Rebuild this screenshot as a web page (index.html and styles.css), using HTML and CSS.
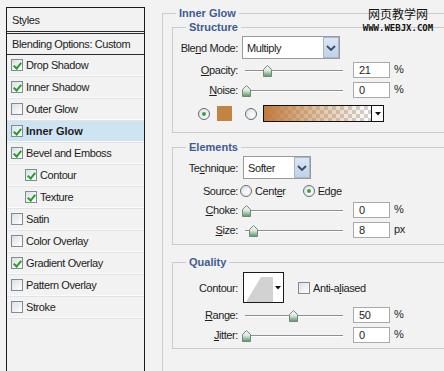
FILE: index.html
```html
<!DOCTYPE html>
<html>
<head>
<meta charset="utf-8">
<link rel="stylesheet" href="styles.css">
</head>
<body>
<svg class="defs" width="0" height="0">
  <defs>
    <linearGradient id="thumbGrad" x1="0" y1="0" x2="0" y2="1">
      <stop offset="0" stop-color="#f6f8f6"/>
      <stop offset="0.45" stop-color="#dfe8e1"/>
      <stop offset="1" stop-color="#4e9b5d"/>
    </linearGradient>
  </defs>
</svg>

<div class="styles-panel">
  <div class="panel-head">Styles</div>
  <div class="blend-row">Blending Options: Custom</div>
  <div class="item"><span class="cb on"></span>Drop Shadow</div>
  <div class="item"><span class="cb on"></span>Inner Shadow</div>
  <div class="item"><span class="cb"></span>Outer Glow</div>
  <div class="item active"><span class="cb on"></span><b>Inner Glow</b></div>
  <div class="item"><span class="cb on"></span>Bevel and Emboss</div>
  <div class="item sub"><span class="cb on"></span>Contour</div>
  <div class="item sub"><span class="cb on"></span>Texture</div>
  <div class="item"><span class="cb"></span>Satin</div>
  <div class="item"><span class="cb"></span>Color Overlay</div>
  <div class="item"><span class="cb on"></span>Gradient Overlay</div>
  <div class="item"><span class="cb"></span>Pattern Overlay</div>
  <div class="item"><span class="cb"></span>Stroke</div>
</div>

<div class="effect">
  <fieldset class="outer">
    <legend class="outer-legend">Inner Glow</legend>

    <fieldset class="group structure">
      <legend>Structure</legend>
      <div class="row">
        <span class="lbl">Ble<u>n</u>d Mode:</span>
        <div class="select blend-select"><span class="sel-text">Multiply</span><span class="sel-btn"><svg viewBox="0 0 10 6" width="10" height="6"><path d="M1 1 L5 5 L9 1" fill="none" stroke="#3c4a5c" stroke-width="1.8"/></svg></span></div>
      </div>
      <div class="row slider-row r-opacity">
        <span class="lbl"><u>O</u>pacity:</span>
        <div class="slider"><svg class="thumb" style="left:18px" viewBox="0 0 9 12" width="9" height="12"><path d="M0.5 4.5 L4.5 0.5 L8.5 4.5 V11.5 H0.5 Z" fill="url(#thumbGrad)" stroke="#77857a"/></svg></div>
        <span class="num">21</span><span class="unit">%</span>
      </div>
      <div class="row slider-row r-noise">
        <span class="lbl"><u>N</u>oise:</span>
        <div class="slider"><svg class="thumb" style="left:-3px" viewBox="0 0 9 12" width="9" height="12"><path d="M0.5 4.5 L4.5 0.5 L8.5 4.5 V11.5 H0.5 Z" fill="url(#thumbGrad)" stroke="#77857a"/></svg></div>
        <span class="num">0</span><span class="unit">%</span>
      </div>
      <div class="row color-row">
        <span class="radio on"></span>
        <span class="swatch"></span>
        <span class="radio"></span>
        <div class="gradient"><span class="grad-fill"></span><span class="grad-btn"><svg viewBox="0 0 6 4" width="6" height="4"><path d="M0 0 H6 L3 3.5 Z" fill="#111"/></svg></span></div>
      </div>
    </fieldset>

    <fieldset class="group elements">
      <legend>Elements</legend>
      <div class="row">
        <span class="lbl">Te<u>c</u>hnique:</span>
        <div class="select tech-select"><span class="sel-text">Softer</span><span class="sel-btn"><svg viewBox="0 0 10 6" width="10" height="6"><path d="M1 1 L5 5 L9 1" fill="none" stroke="#3c4a5c" stroke-width="1.8"/></svg></span></div>
      </div>
      <div class="row source-row">
        <span class="lbl">Source:</span>
        <span class="radio r-center"></span><span class="opt">Cent<u>e</u>r</span>
        <span class="radio on r-edge"></span><span class="opt">Ed<u>g</u>e</span>
      </div>
      <div class="row slider-row r-choke">
        <span class="lbl"><u>C</u>hoke:</span>
        <div class="slider"><svg class="thumb" style="left:-3px" viewBox="0 0 9 12" width="9" height="12"><path d="M0.5 4.5 L4.5 0.5 L8.5 4.5 V11.5 H0.5 Z" fill="url(#thumbGrad)" stroke="#77857a"/></svg></div>
        <span class="num">0</span><span class="unit">%</span>
      </div>
      <div class="row slider-row r-size">
        <span class="lbl"><u>S</u>ize:</span>
        <div class="slider"><svg class="thumb" style="left:4px" viewBox="0 0 9 12" width="9" height="12"><path d="M0.5 4.5 L4.5 0.5 L8.5 4.5 V11.5 H0.5 Z" fill="url(#thumbGrad)" stroke="#77857a"/></svg></div>
        <span class="num">8</span><span class="unit">px</span>
      </div>
    </fieldset>

    <fieldset class="group quality">
      <legend>Quality</legend>
      <div class="row contour-row">
        <span class="lbl">Contour:</span>
        <div class="contour">
          <svg viewBox="0 0 29 28" width="29" height="28"><path d="M2 28 L17 3 H29 V28 Z" fill="#d2d2d2"/></svg>
          <span class="contour-btn"><svg viewBox="0 0 6 4" width="6" height="4"><path d="M0 0 H6 L3 3.5 Z" fill="#111"/></svg></span>
        </div>
        <span class="cb aa"></span><span class="opt">Anti-a<u>l</u>iased</span>
      </div>
      <div class="row slider-row r-range">
        <span class="lbl"><u>R</u>ange:</span>
        <div class="slider"><svg class="thumb" style="left:44px" viewBox="0 0 9 12" width="9" height="12"><path d="M0.5 4.5 L4.5 0.5 L8.5 4.5 V11.5 H0.5 Z" fill="url(#thumbGrad)" stroke="#77857a"/></svg></div>
        <span class="num">50</span><span class="unit">%</span>
      </div>
      <div class="row slider-row r-jitter">
        <span class="lbl"><u>J</u>itter:</span>
        <div class="slider"><svg class="thumb" style="left:-3px" viewBox="0 0 9 12" width="9" height="12"><path d="M0.5 4.5 L4.5 0.5 L8.5 4.5 V11.5 H0.5 Z" fill="url(#thumbGrad)" stroke="#77857a"/></svg></div>
        <span class="num">0</span><span class="unit">%</span>
      </div>
    </fieldset>
  </fieldset>
</div>

<div class="watermark">
  <div class="wm-cn">网页教学网</div>
  <div class="wm-en">WWW.WEBJX.COM</div>
</div>
</body>
</html>
```

FILE: styles.css
```css
html, body {
  margin: 0;
  padding: 0;
}
body {
  width: 444px;
  height: 371px;
  overflow: hidden;
  position: relative;
  background: #f2f2f2;
  display: flex;
  align-items: flex-start;
  font-family: "Liberation Sans", Arial, sans-serif;
  font-size: 11px;
  letter-spacing: -0.4px;
  color: #1d1d1d;
}
.defs {
  position: absolute;
  width: 0;
  height: 0;
}
u {
  text-decoration: underline;
  text-underline-offset: 1px;
}

/* ---------- left styles list ---------- */
.styles-panel {
  flex: none;
  box-sizing: border-box;
  width: 139px;
  height: 390px;
  margin: 7px 0 0 6px;
  border: 1px solid #1a1a1a;
  background: #f2f2f2;
}
.panel-head {
  box-sizing: border-box;
  height: 26px;
  padding-left: 5px;
  display: flex;
  align-items: center;
  border-bottom: 3px double #2b2b2b;
}
.blend-row {
  height: 21px;
  box-sizing: border-box;
  padding-left: 5px;
  display: flex;
  align-items: center;
  border-bottom: 1px solid #2b2b2b;
}
.item {
  height: 22px;
  box-sizing: border-box;
  display: flex;
  align-items: center;
  gap: 3px;
  padding-left: 4px;
  padding-bottom: 1px;
  border-bottom: 1px solid #e2e2e2;
  box-shadow: inset 0 -2px 0 -1px #fbfbfb;
}
.item.sub {
  padding-left: 18px;
}
.item.active {
  background: #cfe4f3;
}
.item b {
  letter-spacing: 0;
}

.cb {
  flex: none;
  width: 12px;
  height: 12px;
  box-sizing: border-box;
  border: 1px solid #7e8b98;
  background: linear-gradient(135deg, #dcdfe3, #ffffff);
  position: relative;
}
.cb.on::after {
  content: "";
  position: absolute;
  left: 3px;
  top: 1px;
  width: 3px;
  height: 6px;
  border-right: 2px solid #23a023;
  border-bottom: 2px solid #23a023;
  transform: rotate(40deg);
}

/* ---------- right effect area ---------- */
.effect {
  flex: none;
  width: 300px;
  margin: 7px 0 0 17px;
}
fieldset {
  margin: 0;
  min-width: 0;
  border: 1px solid #cbcbcb;
}
legend {
  font-weight: bold;
  color: #3d5c93;
  letter-spacing: 0;
  line-height: 12px;
  padding: 0 3px;
}
.outer {
  padding: 2px 0 0 9px;
  height: 420px;
  border-right: none;
}
.outer-legend {
  margin-left: 4px;
}
.group {
  padding: 3px 0 0 0;
  border-right: none;
}
.group legend {
  margin-left: 13px;
}
.structure {
  padding-bottom: 10px;
}
.elements {
  margin-top: 8px;
  padding-bottom: 6px;
}
.quality {
  margin-top: 11px;
  padding-bottom: 5px;
}

.row {
  display: flex;
  align-items: center;
}
.lbl {
  flex: none;
  width: 65px;
  text-align: right;
}

/* select */
.select {
  box-sizing: border-box;
  height: 23px;
  border: 1px solid #9a9a9a;
  background: #fff;
  display: flex;
  align-items: stretch;
}
.blend-select {
  width: 98px;
  margin-left: 4px;
}
.tech-select {
  width: 68px;
  margin-left: 5px;
}
.sel-text {
  flex: 1;
  display: flex;
  align-items: center;
  padding-left: 4px;
}
.sel-btn {
  flex: none;
  width: 16px;
  box-sizing: border-box;
  border: 1px solid #a8b8cc;
  background: linear-gradient(#dbe7f5, #bfd2ea);
  display: flex;
  align-items: center;
  justify-content: center;
}

/* slider rows */
.slider-row {
  height: 16px;
  margin-top: 4px;
}
.r-opacity {
  margin-top: 3px;
}
.slider {
  position: relative;
  flex: none;
  width: 98px;
  height: 16px;
  margin-left: 7px;
  background: linear-gradient(#8f8f8f, #8f8f8f) 0 8px / 100% 1px no-repeat,
              linear-gradient(#ffffff, #ffffff) 0 9px / 100% 1px no-repeat;
}
.thumb {
  position: absolute;
  top: 3px;
}
.num {
  flex: none;
  box-sizing: border-box;
  width: 37px;
  height: 16px;
  margin-left: 10px;
  padding-left: 5px;
  border: 1px solid #a9a9a9;
  background: #fff;
  display: flex;
  align-items: center;
}
.unit {
  margin-left: 4px;
  margin-top: -3px;
}

/* colour row */
.color-row {
  height: 17px;
  margin-top: 7px;
  padding-left: 25px;
}
.radio {
  flex: none;
  width: 12px;
  height: 12px;
  box-sizing: border-box;
  border-radius: 50%;
  border: 1px solid #5f6f80;
  background: radial-gradient(circle at 60% 60%, #ffffff, #dadada);
  position: relative;
}
.radio.on::after {
  content: "";
  position: absolute;
  left: 3px;
  top: 3px;
  width: 4px;
  height: 4px;
  border-radius: 50%;
  background: #35a43f;
}
.swatch {
  flex: none;
  width: 15px;
  height: 15px;
  margin-left: 7px;
  background: #c28440;
}
.color-row .swatch + .radio {
  margin-left: 13px;
}
.gradient {
  flex: none;
  box-sizing: border-box;
  width: 121px;
  height: 17px;
  margin-left: 6px;
  border: 1px solid #111;
  display: flex;
  background: conic-gradient(#d2d2d2 25%, #ffffff 0 50%, #d2d2d2 0 75%, #ffffff 0) 0 0 / 8px 8px;
}
.grad-fill {
  flex: 1;
  background: linear-gradient(to right, #c07a3c 0%, rgba(196, 132, 70, 0.55) 45%, rgba(200, 160, 120, 0) 100%);
}
.grad-btn {
  flex: none;
  width: 11px;
  border-left: 1px solid #111;
  background: #fff;
  display: flex;
  align-items: center;
  justify-content: center;
}

/* elements */
.source-row {
  height: 14px;
  margin-top: 5px;
}
.r-center {
  margin-left: 2px;
}
.opt {
  margin-left: 3px;
}
.r-edge {
  margin-left: 17px;
}
.r-choke {
  margin-top: 4px;
}

/* quality */
.contour-row {
  margin-top: 1px;
}
.contour {
  flex: none;
  box-sizing: border-box;
  width: 41px;
  height: 31px;
  margin-left: 5px;
  border: 1px solid #1a1a1a;
  background: #fff;
  display: flex;
  align-items: flex-end;
}
.contour svg {
  display: block;
}
.contour-btn {
  flex: 1;
  align-self: stretch;
  display: flex;
  align-items: center;
  justify-content: center;
}
.cb.aa {
  margin-left: 14px;
}
.r-range {
  margin-top: 4px;
}

/* watermark */
.watermark {
  position: absolute;
  left: 360px;
  top: 6px;
  width: 76px;
  text-align: center;
  color: #111;
}
.wm-cn {
  font-family: "Noto Sans CJK SC", sans-serif;
  font-size: 12px;
  height: 15px;
  line-height: 15px;
  overflow: hidden;
  letter-spacing: 0;
}
.wm-en {
  margin-top: 3px;
  font-family: "DejaVu Sans Mono", monospace;
  font-weight: bold;
  font-size: 9px;
  height: 9px;
  line-height: 9px;
  letter-spacing: 0;
}
```
